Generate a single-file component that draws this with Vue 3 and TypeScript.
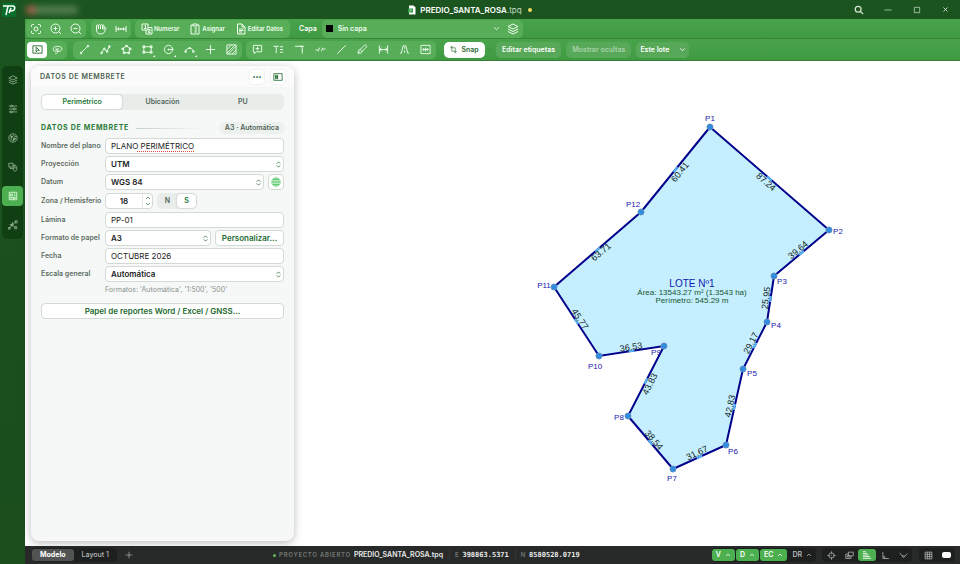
<script setup lang="ts">
import { h, ref } from 'vue'

const icons: Record<string, string> = {
  focus: 'M3 8V5a2 2 0 0 1 2-2h3M16 3h3a2 2 0 0 1 2 2v3M21 16v3a2 2 0 0 1-2 2h-3M8 21H5a2 2 0 0 1-2-2v-3M8 12a4 4 0 1 0 8 0a4 4 0 1 0-8 0M12 12v.1',
  zoomIn: 'M2 11a9 9 0 1 0 18 0a9 9 0 1 0-18 0M17.500 17.500L22 22M7 11h8M11 7v8',
  zoomOut: 'M2 11a9 9 0 1 0 18 0a9 9 0 1 0-18 0M17.500 17.500L22 22M7 11h8',
  hand: 'M3 12V6c0-3 4-3 4 0v6M7 6c0-4 4-4 4 0v6M11 6c0-4 4-4 4 0v6M15 6c0-3 3-3 3 0v8M18 10c3-3 5 0 3 3c-2 6-4 9-10 9c-6 0-8-4-8-10',
  measure: 'M2 6v12M22 6v12M2 12h20M7 9v6M17 9v6M12 10v4',
  number: 'M2 2h12v12H2zM14 9h8v13H10v-8M7 5.500l2-1V11M6 11h5M15 13h3v3h-3v3h4',
  clipboard: 'M8 4H4v18h16V4h-4M8 2h8v4H8zM8 10h.1M11 10h5M8 14h.1M11 14h5M8 18h.1M11 18h5',
  doc: 'M5 2h9l6 6v14H5zM14 2v6h6M8 12h9M8 15h9M8 18h6',
  layers: 'M12 2L22 7L12 12L2 7zM2 12l10 5l10-5M2 17l10 5l10-5',
  select: 'M2 4h20v16H2zM9 7v10l3-3h4z',
  lasso: 'M8 17c-8-2-7-12 4-12s13 9 4 11c-5 1-8-1-7-3s5-1 4 3s-3 5-6 5M7 11h9',
  line: 'M5 19L19 5M3 21h3v-3H3zM18 6h3V3h-3z',
  polyline: 'M3 19l6-8l6 5l6-11M2 18h3v3H2zM8 9h3v3H8zM14 15h3v3h-3zM19 4h3v3h-3z',
  polygon: 'M12 4l8 6l-3 9H7L4 10zM10 3h4v3h-4zM18 9h4v3h-4zM15 18h4v3h-4zM5 18h4v3H5zM2 9h4v3H2z',
  rect: 'M4 6h16v12H4zM2 4h4v4H2zM18 4h4v4h-4zM2 16h4v4H2zM18 16h4v4h-4z',
  circle: 'M3 12a9 9 0 1 0 18 0a9 9 0 1 0-18 0M11 12h11M11 11h2v2h-2zM20 11h2v2h-2z',
  arc: 'M3 16c3-9 15-9 18 0M2 15h3v3H2zM19 15h3v3h-3zM11 8h3v2h-3z',
  plus: 'M12 2v20M2 12h20',
  hatch: 'M2 2h20v20H2zM2 12L12 2M2 20L20 2M5 22L22 5M13 22l9-9',
  comment: 'M3 3h18v14H10l-5 4v-4H3zM12 6v8M8 10h8',
  text: 'M1 5h12M7 5v15M15 6h7M15 12h7M15 18h7',
  corner: 'M2 5h16v16M12 5h10',
  parallel: 'M1 13h6M17 11h6M7 16l3-8M14 16l3-8',
  slash: 'M3 21L21 3',
  brush: 'M20 3c3 2 1 4-9 13l-4-4C16 2 18 1 20 3M7 12c-4-1-4 4-5 8c5 1 9 0 9-4M6 16l-3 4',
  dimension: 'M3 3v18M21 3v18M3 12h18M8 8l-4 4l4 4M16 8l4 4l-4 4',
  road: 'M2 20h3L9 4h6l4 16h3M12 7v3M12 14v5',
  frame: 'M2 3h20v18H2zM5 12h14M8 9v6M16 9v6M12 8v8',
  crop: 'M6 1v17h17M1 6h17v17M9 3L6 1L3 4M15 21l3 2l3-3',
  chevron: 'M4 8l8 8l8-8',
  up: 'M4 16l8-8l8 8',
  updown: 'M6 9l6-6l6 6M6 15l6 6l6-6',
  search: 'M3 10a7 7 0 1 0 14 0a7 7 0 1 0-14 0M15.500 15.500L22 22',
  minimize: 'M1 12h22',
  maximize: 'M4 4h16v16H4z',
  close: 'M5 5l14 14M19 5L5 19',
  sliders: 'M2 5h5M11 5h11M2 12h11M17 12h5M2 19h4M10 19h12M7 3h4v4H7zM13 10h4v4h-4zM6 17h4v4H6z',
  globe: 'M2 12a10 10 0 1 0 20 0a10 10 0 1 0-20 0M5 6l4 3l5-3l3 3l4-1M9 9l-2 5l4 6M13 20l1-6l5-1M7 8h3v3H7zM13 12h4v4h-4z',
  shapes: 'M2 3h10v9H2zM13 13c0-5 8-5 8 0v5c0 5-8 5-8 0zM13 14h8M12 7h5v3M5 12v4h8',
  plate: 'M3 3h18v18H3zM6 7h5v4H6zM14 7h4M14 11h4M3 15h18M7 15v6M12 18h6M12 15v6',
  nodes: 'M3 20l7-8l9-8M10 12l8 6M4 11l6 1l1-7M1 18h4v4H1zM17 2h5v5h-5zM16 16h5v5h-5zM8 10h4v4H8z',
  sidebar: 'M2 4h20v16H2zM6 8h5v8H6zM7 9v6M9 9v6M11 9v6',
  mesh: 'M2 12a10 10 0 1 0 20 0a10 10 0 1 0-20 0M2 12h20M12 2v20M5 6h14M5 18h14M7 4v16M17 4v16',
  target: 'M5 12a7 7 0 1 0 14 0a7 7 0 1 0-14 0M12 1v6M12 17v6M1 12h6M17 12h6M11 12h2',
  copies: 'M9 3h13v10H9zM9 8H2v12h14v-7M6 12h6v4H6z',
  bars: 'M2 4h7M2 8h11M2 12h14M2 16h17M2 20h20',
  ortho: 'M5 3v17h16M5 15h5v5',
  polar: 'M2 5l10 13L22 7M8 13h7',
  grid: 'M3 3h18v18H3zM3 9h18M3 15h18M9 3v18M15 3v18',
}

const Icon = (props: { name: string }) =>
  h('svg', { viewBox: '0 0 24 24', class: 'icon', 'aria-hidden': 'true' }, [h('path', { d: icons[props.name] })])

const actions = [
  { icon: 'number', text: 'Numerar' },
  { icon: 'clipboard', text: 'Asignar' },
  { icon: 'doc', text: 'Editar Datos' },
]
const drawTools = ['line', 'polyline', 'polygon', 'rect', 'circle', 'arc', 'plus', 'hatch']
const withMenu = ['rect', 'circle', 'arc']
const noteTools = ['comment', 'text', 'corner', 'parallel', 'slash', 'brush', 'dimension', 'road', 'frame']
const railItems = ['layers', 'sliders', 'globe', 'shapes', 'plate', 'nodes']
const tabs = ['Perimétrico', 'Ubicación', 'PU']
const modes = ['V', 'D', 'EC', 'DR']

const tab = ref('Perimétrico')
const plan = ref('PLANO PERIMÉTRICO')
const zone = ref('18')
const hemisphere = ref('S')
const sheet = ref('PP-01')
const date = ref('OCTUBRE 2026')

interface Vertex { x: number; y: number; lx: number; ly: number }
const vertices: Vertex[] = [
  { x: 710, y: 127, lx: 710, ly: 118 },
  { x: 829, y: 230, lx: 838, ly: 231 },
  { x: 774, y: 276, lx: 782, ly: 281 },
  { x: 767, y: 322, lx: 776, ly: 325 },
  { x: 743, y: 369, lx: 752, ly: 373 },
  { x: 726, y: 445, lx: 733, ly: 451 },
  { x: 673, y: 469, lx: 672, ly: 478 },
  { x: 628, y: 416, lx: 619, ly: 417 },
  { x: 664, y: 346, lx: 656, ly: 352 },
  { x: 599, y: 356, lx: 595, ly: 366 },
  { x: 554, y: 287, lx: 544, ly: 285 },
  { x: 641, y: 212, lx: 633, ly: 204 },
]
const outline = vertices.map((v) => `${v.x},${v.y}`).join(' ')

const sides = [
  { text: '87.24', x: 766, y: 182, a: 41 },
  { text: '39.64', x: 798, y: 250, a: -40 },
  { text: '25.95', x: 766, y: 298, a: -82 },
  { text: '29.17', x: 751, y: 343, a: -63 },
  { text: '42.83', x: 730, y: 406, a: -78 },
  { text: '31.67', x: 697, y: 453, a: -25 },
  { text: '38.54', x: 654, y: 440, a: 49 },
  { text: '43.83', x: 650, y: 384, a: -63 },
  { text: '36.53', x: 631, y: 347, a: -9 },
  { text: '45.77', x: 580, y: 319, a: 57 },
  { text: '63.71', x: 601, y: 252, a: -40 },
  { text: '60.41', x: 680, y: 172, a: -51 },
]

// Short highlighted stretch at the middle of each side.
const grips = vertices.map((v, i) => {
  const n = vertices[(i + 1) % vertices.length]
  const mx = (v.x + n.x) / 2
  const my = (v.y + n.y) / 2
  const len = Math.hypot(n.x - v.x, n.y - v.y)
  const dx = ((n.x - v.x) / len) * 3
  const dy = ((n.y - v.y) / len) * 3
  return { x1: mx - dx, y1: my - dy, x2: mx + dx, y2: my + dy }
})
</script>

<template>
  <div class="app">
    <header class="titlebar">
      <div class="brand">
        <svg class="logo" viewBox="0 0 14 14" aria-hidden="true">
          <rect width="14" height="14" rx="2" fill="#08702b" />
          <path d="M1 3h10q3 1 1 4q-1 1-4 1H7M6 3L4 12M9 5L7 10" fill="none" stroke="#fff" stroke-width="1.500" />
        </svg>
        <span class="account"><i></i></span>
      </div>
      <div class="doc-title">
        <svg class="file" viewBox="0 0 16 20" aria-hidden="true">
          <path d="M2 1h9l4 4v14H2z" fill="#fff" />
          <path d="M0 7h10v8H0z" fill="#2f9a45" />
          <path d="M3 10h5M5 10l-1 4" stroke="#fff" fill="none" />
        </svg>
        <strong>PREDIO_SANTA_ROSA<span>.tpq</span></strong>
        <i class="dirty"></i>
      </div>
      <div class="window-buttons">
        <button aria-label="Buscar"><Icon name="search" class="search" /></button>
        <button aria-label="Minimizar"><Icon name="minimize" /></button>
        <button aria-label="Maximizar"><Icon name="maximize" /></button>
        <button aria-label="Cerrar"><Icon name="close" class="tiny" /></button>
      </div>
    </header>

    <nav class="rail">
      <div class="rail-list">
        <button v-for="r in railItems" :key="r" :class="{ on: r === 'plate' }" :aria-label="r"><Icon :name="r" /></button>
      </div>
    </nav>

    <div class="toolbars">
      <div class="bar top">
        <div class="group">
          <button class="tool" aria-label="Encuadrar"><Icon name="focus" class="big" /></button>
          <button class="tool" aria-label="Acercar"><Icon name="zoomIn" class="big" /></button>
          <button class="tool" aria-label="Alejar"><Icon name="zoomOut" class="big" /></button>
        </div>
        <div class="group">
          <button class="tool" aria-label="Mover"><Icon name="hand" class="big" /></button>
          <button class="tool" aria-label="Medir"><Icon name="measure" class="big" /></button>
        </div>
        <div class="group actions">
          <button v-for="a in actions" :key="a.text"><Icon :name="a.icon" class="big" />{{ a.text }}</button>
        </div>
        <label class="layer-label" for="capa">Capa</label>
        <div class="group layer">
          <i class="swatch"></i>
          <div class="picker">
            <select id="capa"><option>Sin capa</option></select>
            <Icon name="chevron" />
          </div>
          <button class="tool" aria-label="Capas"><Icon name="layers" class="big" /></button>
        </div>
      </div>
      <div class="bar bottom">
        <div class="group picks">
          <button class="tool on" aria-label="Seleccionar"><Icon name="select" /></button>
          <button class="tool" aria-label="Lazo"><Icon name="lasso" /></button>
        </div>
        <div class="group draws">
          <button v-for="t in drawTools" :key="t" class="tool" :class="{ menu: withMenu.includes(t) }" :aria-label="t"><Icon :name="t" /></button>
        </div>
        <div class="group draws">
          <button v-for="t in noteTools" :key="t" class="tool" :aria-label="t"><Icon :name="t" /></button>
        </div>
        <div class="snap-group">
          <button class="snap"><Icon name="crop" />Snap</button>
          <button class="caret" aria-label="Opciones de snap"><Icon name="chevron" /></button>
        </div>
        <div class="text-buttons">
          <button>Editar etiquetas</button>
          <button disabled>Mostrar ocultas</button>
          <div class="picker scope">
            <select aria-label="Ámbito"><option>Este lote</option></select>
            <Icon name="chevron" />
          </div>
        </div>
      </div>
    </div>

    <main class="canvas">
      <svg class="drawing" viewBox="25 61 935 485" preserveAspectRatio="xMidYMid meet">
        <polygon :points="outline" />
        <line v-for="(g, i) in grips" :key="'g' + i" v-bind="g" />
        <text v-for="s in sides" :key="s.text" class="side" :transform="`translate(${s.x} ${s.y}) rotate(${s.a})`">{{ s.text }}</text>
        <g v-for="(v, i) in vertices" :key="i">
          <circle :cx="v.x" :cy="v.y" r="3" />
          <text class="vertex" :x="v.lx" :y="v.ly">P{{ i + 1 }}</text>
        </g>
        <text class="lot" x="692" y="283">LOTE Nº1</text>
        <text class="info" x="692" y="292">Área: 13543.27 m² (1.3543 ha)</text>
        <text class="info" x="692" y="300">Perímetro: 545.29 m</text>
      </svg>

      <aside class="panel">
        <div class="panel-head">
          <h2>DATOS DE MEMBRETE</h2>
          <button class="more" aria-label="Más">•••</button>
          <button aria-label="Acoplar panel"><Icon name="sidebar" /></button>
        </div>
        <div class="panel-body">
          <div class="tabs">
            <button v-for="t in tabs" :key="t" :class="{ on: t === tab }" @click="tab = t">{{ t }}</button>
          </div>
          <div class="section">
            <h3>DATOS DE MEMBRETE</h3>
            <hr />
            <span>A3 · Automática</span>
          </div>
          <form class="fields" @submit.prevent>
            <label for="nombre">Nombre del plano</label>
            <div class="row"><div class="spell"><input id="nombre" v-model="plan" spellcheck="false" /><i></i></div></div>

            <label for="proy">Proyección</label>
            <div class="row"><div class="choice"><select id="proy"><option>UTM</option></select><Icon name="updown" /></div></div>

            <label for="datum">Datum</label>
            <div class="row">
              <div class="choice"><select id="datum"><option>WGS 84</option></select><Icon name="updown" /></div>
              <button type="button" class="world" aria-label="Buscar datum"><Icon name="mesh" /></button>
            </div>

            <label for="zona">Zona / Hemisferio</label>
            <div class="row zone-row">
              <div class="spin">
                <input id="zona" v-model="zone" />
                <span><Icon name="up" /><Icon name="chevron" /></span>
              </div>
              <div class="tabs hemi">
                <button v-for="o in ['N', 'S']" :key="o" type="button" :class="{ on: o === hemisphere }" @click="hemisphere = o">{{ o }}</button>
              </div>
            </div>

            <label for="lamina">Lámina</label>
            <div class="row"><input id="lamina" v-model="sheet" /></div>

            <label for="papel">Formato de papel</label>
            <div class="row">
              <div class="choice"><select id="papel"><option>A3</option></select><Icon name="updown" /></div>
              <button type="button" class="action custom">Personalizar...</button>
            </div>

            <label for="fecha">Fecha</label>
            <div class="row"><input id="fecha" v-model="date" /></div>

            <label for="escala">Escala general</label>
            <div class="row"><div class="choice"><select id="escala"><option>Automática</option></select><Icon name="updown" /></div></div>
            <p class="hint">Formatos: 'Automática', '1:500', '500'</p>
          </form>
          <button class="action">Papel de reportes Word / Excel / GNSS...</button>
        </div>
      </aside>
    </main>

    <footer class="status">
      <div class="sheets">
        <button class="on">Modelo</button>
        <button>Layout 1</button>
      </div>
      <button class="add" aria-label="Agregar layout"><Icon name="plus" /></button>
      <div class="info-line">
        <i></i><small>PROYECTO ABIERTO</small><b>PREDIO_SANTA_ROSA.tpq</b>
        <span class="coord"><small>E</small><code>398863.5371</code></span>
        <span class="coord"><small>N</small><code>8580528.0719</code></span>
      </div>
      <div class="modes">
        <button v-for="m in modes" :key="m" :class="{ on: m !== 'DR' }">{{ m }}<Icon name="up" /></button>
      </div>
      <div class="aids">
        <button v-for="a in ['target', 'copies', 'bars', 'ortho', 'polar']" :key="a" :class="{ on: a === 'bars' }" :aria-label="a"><Icon :name="a" /></button>
      </div>
      <div class="aids views">
        <button aria-label="Cuadrícula"><Icon name="grid" /></button>
        <button aria-label="Fondo"><i></i></button>
      </div>
    </footer>
  </div>
</template>

<style>
body {
  margin: 0;
}
</style>

<style scoped>
* {
  box-sizing: border-box;
}
.app {
  display: grid;
  grid-template-columns: 25px minmax(0, 1fr);
  grid-template-rows: 19px auto minmax(0, 1fr) 18px;
  height: 100vh;
  min-height: 400px;
  overflow: hidden;
  background: #1b541f;
  font: 600 8px/12px Inter, 'Liberation Sans', sans-serif;
  color: #fff;
}
button,
input,
select {
  margin: 0;
  padding: 0;
  border: 0;
  background: none;
  color: inherit;
  font: inherit;
  outline: 0;
}
button {
  display: flex;
  align-items: center;
  justify-content: center;
  white-space: nowrap;
}
select {
  appearance: none;
}
.icon {
  flex: none;
  width: 10px;
  height: 10px;
  fill: none;
  stroke: currentColor;
  stroke-width: 2;
  stroke-linejoin: round;
}
.icon.big {
  width: 12px;
  height: 12px;
}
.icon.tiny {
  width: 7px;
  height: 7px;
  stroke-width: 3;
}

/* Title bar */
.titlebar {
  grid-column: 1 / -1;
  display: grid;
  grid-template-columns: 1fr auto 1fr;
  align-items: center;
  background: #1b541f;
}
.brand,
.doc-title,
.window-buttons {
  display: flex;
  align-items: center;
}
.logo {
  width: 14px;
  height: 14px;
  margin-left: 2px;
}
.account {
  width: 52px;
  height: 8px;
  margin-left: 10px;
  border-radius: 4px;
  background: #55804f;
  filter: blur(3px);
}
.account i {
  display: block;
  width: 10px;
  height: 8px;
  border-radius: 4px;
  background: #b0604f;
}
.doc-title {
  gap: 4px;
  padding-right: 20px;
}
.doc-title strong {
  font-weight: 600;
}
.doc-title strong span {
  font-weight: 400;
  color: #c5dac5;
}
.file {
  width: 8px;
  height: 10px;
}
.dirty {
  width: 4px;
  height: 4px;
  margin-left: 2px;
  border-radius: 50%;
  background: #f0dc62;
}
.window-buttons {
  justify-content: flex-end;
}
.window-buttons button {
  width: 29px;
  height: 19px;
  color: #d5e6d5;
}
.window-buttons .icon {
  width: 8px;
  height: 8px;
}
.window-buttons .search {
  width: 10px;
  height: 10px;
  stroke-width: 3;
}
.window-buttons .tiny {
  width: 7px;
  height: 7px;
}

/* Left rail */
.rail {
  grid-row: 2 / -1;
  padding: 47px 2px 0;
  background: linear-gradient(#1b541f, #1a4c1c);
}
.rail-list {
  display: flex;
  flex-direction: column;
  gap: 9px;
  padding: 4px 0;
  border-radius: 5px;
  background: #103f13;
}
.rail button {
  height: 20px;
  border-radius: 4px;
  color: #92b392;
}
.rail button.on {
  background: #4caf50;
  color: #e2ffe2;
}

/* Toolbars */
.bar {
  display: flex;
  align-items: center;
  gap: 4px;
  background: linear-gradient(#49a34a, #3f9b42);
}
.top {
  height: 20px;
  padding: 0 1px;
  border-bottom: 1px solid #38853a;
}
.bottom {
  height: 22px;
  padding: 0 2px;
  border-bottom: 1px solid #377f39;
}
.group {
  display: flex;
  align-items: center;
  height: 18px;
  border-radius: 5px;
  background: #58ad59;
  color: #f0fff0;
}
.tool {
  position: relative;
  width: 20px;
  height: 16px;
}
.bottom .tool .icon {
  width: 11px;
  height: 11px;
}
.top .group:nth-child(2) {
  margin-left: 1px;
}
.actions {
  gap: 10px;
  padding: 0 7px 0 6px;
  font-size: 6px;
}
.actions button {
  gap: 1px;
}
.layer-label {
  padding: 0 1px 0 5px;
  font-size: 7px;
}
.layer {
  padding-left: 4px;
}
.swatch {
  width: 7px;
  height: 7px;
  background: #000;
}
.picker {
  display: grid;
  align-items: center;
}
.picker > * {
  grid-area: 1 / 1;
}
.picker .icon {
  justify-self: end;
  width: 7px;
  height: 7px;
  margin-right: 3px;
  stroke-width: 3;
  pointer-events: none;
}
.layer .picker {
  width: 170px;
}
.layer select {
  height: 16px;
  padding-left: 5px;
  font-size: 7px;
}
.picks {
  margin-right: 2px;
}
.tool.on {
  border-radius: 4px;
  background: #fff;
  color: #2c6d30;
}
.draws {
  padding: 0 1px;
  gap: 1px;
}
.menu::after {
  position: absolute;
  right: 2px;
  bottom: 1px;
  border: 1px solid #fff;
  border-top-color: transparent;
  border-left-color: transparent;
  content: '';
}
.snap-group,
.text-buttons {
  display: flex;
  align-items: center;
  gap: 5px;
}
.snap-group {
  gap: 2px;
  margin-left: 4px;
}
.snap {
  gap: 4px;
  width: 41px;
  height: 16px;
  border-radius: 5px;
  background: #fff;
  color: #286a2e;
  font-size: 7px;
}
.snap .icon {
  width: 7px;
  height: 7px;
}
.caret {
  width: 5px;
  color: #347a37;
}
.caret .icon {
  width: 5px;
  height: 5px;
}
.text-buttons button,
.scope {
  height: 16px;
  padding: 0 6px;
  border-radius: 5px;
  background: #57a858;
  font-size: 7px;
}
.text-buttons button:disabled {
  color: #a8d3a8;
}
.scope {
  width: 53px;
  padding: 0 0 0 4px;
}

/* Canvas */
.canvas {
  position: relative;
  display: flex;
  padding: 5px 6px;
  background: #fff;
}
.drawing {
  position: absolute;
  inset: 0;
  width: 100%;
  height: 100%;
  font: 400 8px 'Liberation Sans', sans-serif;
}
.drawing polygon {
  fill: #c5efff;
  stroke: #00008b;
  stroke-width: 2;
}
.drawing line {
  stroke: #59b4f5;
  stroke-width: 2;
}
.drawing circle {
  fill: #318be0;
  stroke: #5b8fc4;
  stroke-width: 1;
}
.drawing text {
  text-anchor: middle;
  dominant-baseline: central;
}
.side {
  font-size: 9px;
  fill: #12241c;
}
.vertex {
  fill: #2216ad;
}
.lot {
  font-size: 10px;
  fill: #1018b0;
}
.info {
  fill: #17562b;
}

/* Title block panel */
.panel {
  position: relative;
  width: 263px;
  border-radius: 8px;
  background: #f5f8f6;
  box-shadow: 0 2px 8px #0004;
  color: #1c241e;
}
.panel-head {
  display: flex;
  align-items: center;
  gap: 7px;
  height: 21px;
  padding: 0 9px;
  border-radius: 8px 8px 0 0;
  background: #fafbfa;
}
h2,
h3 {
  flex: 1;
  margin: 0;
  font: 600 7px/12px Inter, 'Liberation Sans', sans-serif;
  letter-spacing: 0.08em;
  color: #4d5f52;
  white-space: nowrap;
}
.panel-head button {
  width: 14px;
  height: 14px;
  border-radius: 3px;
  background: #fff;
  box-shadow: 0 0 2px #0002;
  color: #246b30;
}
.more {
  font-size: 6px;
}
.panel-body {
  display: flex;
  flex-direction: column;
  padding: 7px 10px;
}
.tabs {
  display: grid;
  grid-auto-columns: 1fr;
  grid-auto-flow: column;
  height: 16px;
  padding: 1px;
  border-radius: 5px;
  background: #e8edea;
  font-size: 7px;
  color: #52645a;
}
.tabs button {
  border-radius: 4px;
}
.tabs .on {
  background: #fff;
  box-shadow: 0 0 2px #0004;
  color: #207533;
}
.section {
  display: flex;
  align-items: center;
  gap: 7px;
  margin: 12px 0 4px;
}
.section h3 {
  flex: none;
  color: #2b7a37;
  font-weight: 700;
  letter-spacing: 0.1em;
}
.section hr {
  flex: 1;
  height: 1px;
  margin: 0 10px 0 0;
  border: 0;
  background: linear-gradient(90deg, #c2d0c6, #f5f8f6);
}
.section span {
  padding: 0 5px;
  border-radius: 4px;
  background: #edf1ee;
  color: #52645a;
  font-size: 7px;
}
.fields {
  display: grid;
  grid-template-columns: 60px minmax(0, 1fr);
  column-gap: 4px;
  row-gap: 2px;
  align-items: center;
}
.fields label {
  color: #5d6c63;
  font-size: 7px;
  white-space: nowrap;
}
.row {
  display: flex;
  gap: 4px;
  min-height: 16px;
}
.row input,
.row select {
  width: 100%;
  height: 16px;
  padding: 0 5px;
  border: 1px solid #d3dad5;
  border-radius: 4px;
  background: #fff;
}
.row input {
  font-weight: 400;
}
.choice,
.spell {
  display: grid;
  flex: 1;
  align-items: center;
}
.choice > *,
.spell > * {
  grid-area: 1 / 1;
}
.choice .icon {
  justify-self: end;
  width: 7px;
  height: 7px;
  margin-right: 2px;
  color: #3d7d48;
  stroke-width: 3;
  pointer-events: none;
}
.spell i {
  align-self: end;
  width: 57px;
  margin: 0 0 2px 32px;
  border-bottom: 1px dotted #e04848;
}
.world {
  width: 16px;
  height: 16px;
  border: 1px solid #d3dad5;
  border-radius: 4px;
  background: #fff;
  color: #4fc763;
}
.zone-row {
  align-items: center;
  height: 18px;
}
.row .spin {
  display: flex;
  width: 48px;
  border: 1px solid #d3dad5;
  border-radius: 4px;
  background: #fff;
}
.row .spin input {
  width: 36px;
  height: 14px;
  border: 0;
  background: none;
  font-weight: 600;
  text-align: center;
}
.spin span {
  display: flex;
  flex-direction: column;
  align-items: center;
  justify-content: space-evenly;
  width: 10px;
  border-left: 1px solid #e4e8e5;
  color: #3d7d48;
}
.spin .icon {
  width: 6px;
  height: 6px;
  stroke-width: 3;
}
.hemi {
  width: 40px;
}
.action {
  height: 16px;
  border: 1px solid #d3dad5;
  border-radius: 4px;
  background: #fff;
  color: #226b2f;
}
.custom {
  width: 69px;
}
.hint {
  grid-column: 2;
  margin: 0 0 7px;
  color: #8b938e;
  font-size: 7px;
  font-weight: 400;
}

/* Status bar */
.status {
  display: flex;
  align-items: center;
  padding: 0 5px 0 7px;
  background: #282a29;
  color: #b5b8b6;
}
.sheets,
.modes,
.aids {
  display: flex;
  align-items: center;
  height: 14px;
  border-radius: 4px;
  background: #1e201f;
  font-size: 7px;
}
.sheets button {
  height: 12px;
  padding: 0 8px;
  border-radius: 3px;
  font-weight: 500;
}
.sheets .on {
  background: #515452;
  color: #fff;
  font-weight: 700;
}
.add {
  width: 24px;
}
.add .icon {
  width: 8px;
  height: 8px;
}
.info-line {
  display: flex;
  flex: 1;
  align-items: center;
  justify-content: center;
  gap: 3px;
  white-space: nowrap;
}
.info-line > i {
  width: 3px;
  height: 3px;
  border-radius: 50%;
  background: #61bb5a;
}
.info-line small {
  color: #747875;
  font-size: 6px;
  letter-spacing: 0.12em;
}
.info-line b {
  color: #e9ebea;
  font-size: 7px;
  font-weight: 600;
}
.coord {
  display: flex;
  gap: 3px;
  margin-left: 3px;
  padding-left: 5px;
  border-left: 1px solid #333;
}
.coord code {
  color: #e9ebea;
  font: 700 7px/12px 'DejaVu Sans Mono', monospace;
}
.modes {
  gap: 1px;
}
.modes button {
  gap: 4px;
  height: 12px;
  padding: 0 4px;
  border-radius: 3px;
}
.modes .icon {
  width: 6px;
  height: 6px;
  stroke-width: 3;
}
.modes .on,
.aids .on {
  background: #4caf50;
  color: #fff;
}
.aids {
  margin-left: 6px;
}
.aids button {
  width: 18px;
  height: 12px;
  border-radius: 3px;
}
.aids .icon {
  width: 9px;
  height: 9px;
}
.aids .on .icon {
  width: 12px;
  height: 10px;
}
.aids.views {
  margin-left: 7px;
}
.views i {
  width: 9px;
  height: 6px;
  border-radius: 2px;
  background: #fff;
}
</style>
